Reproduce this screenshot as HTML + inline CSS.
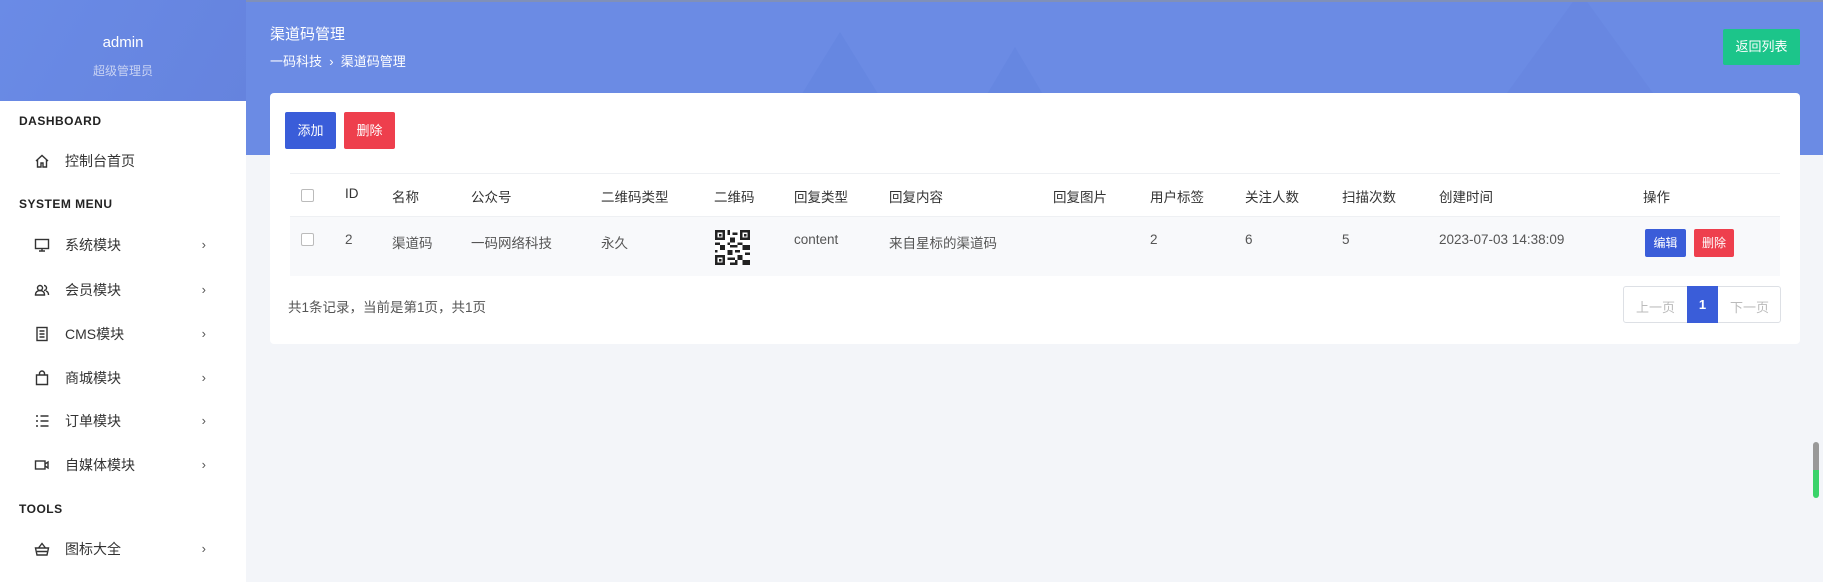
<!DOCTYPE html>
<html><head><meta charset="utf-8"><style>
*{margin:0;padding:0;box-sizing:border-box}
body{width:1823px;height:582px;overflow:hidden;background:#f3f5f9;font-family:"Liberation Sans","Noto Sans CJK SC",sans-serif;color:#333;position:relative}
.top{position:absolute;left:0;top:0;width:1823px;height:155px;background:#6b8be4;border-top:2px solid #8090b8;overflow:hidden}
.tri{position:absolute;width:0;height:0;border-left:80px solid transparent;border-right:80px solid transparent;border-bottom:130px solid rgba(80,110,210,.14)}
.side{position:absolute;left:0;top:101px;width:246px;height:481px;background:#fff}
.prof{position:absolute;left:0;top:0;width:246px;height:101px;text-align:center;color:#fff;background:linear-gradient(120deg,#6a8be6,#6583de)}
.sec{position:absolute;left:19px;font-size:12px;font-weight:bold;letter-spacing:.5px;color:#222}
.it{position:absolute;left:34px;width:180px;font-size:14px;color:#333;height:20px;line-height:20px}
.it svg{position:absolute;left:0;top:2px}
.it span{position:absolute;left:31px}
.it b{position:absolute;right:8px;font-weight:normal;color:#555;font-size:13px}
.card{position:absolute;left:270px;top:93px;width:1530px;height:251px;background:#fff;border-radius:4px}
.btn{position:absolute;color:#fff;font-size:13px;text-align:center;border-radius:2px}
.th,.td{position:absolute;font-size:13.5px;color:#333}
.td{color:#555}
.cb{position:absolute;width:13px;height:13px;border:1px solid #bbb;border-radius:2px;background:#fff}
</style></head><body>
<div class="top">
<div class="tri" style="left:760px;top:30px"></div>
<div class="tri" style="left:950px;top:45px;border-left-width:65px;border-right-width:65px;border-bottom-width:110px"></div>
<div class="tri" style="left:1450px;top:-10px;border-left-width:130px;border-right-width:130px;border-bottom-width:180px;border-bottom-color:rgba(80,110,210,.1)"></div>
</div>
<div class="prof"><div style="position:absolute;top:34px;width:100%;font-size:15px">admin</div><div style="position:absolute;top:62px;width:100%;font-size:12px;color:#c8d2f3">超级管理员</div></div>
<div style="position:absolute;left:270px;top:23px;color:#fff;font-size:15px">渠道码管理</div>
<div style="position:absolute;left:270px;top:51px;color:#fff;font-size:13px">一码科技 &nbsp;›&nbsp; 渠道码管理</div>
<div class="btn" style="left:1723px;top:29px;width:77px;height:36px;line-height:36px;background:#1cc58a">返回列表</div>
<div class="side">
<div class="sec" style="top:13px">DASHBOARD</div>
<div class="it" style="top:50px"><svg width="16" height="16" viewBox="0 0 16 16" fill="none" stroke="#333" stroke-width="1.4"><path d="M2 8L8 2.5 14 8M3.5 6.8V14h3.5v-4h2v4h3.5V6.8"/></svg><span>控制台首页</span></div>
<div class="sec" style="top:96px">SYSTEM MENU</div>
<div class="it" style="top:134px"><svg width="16" height="16" viewBox="0 0 16 16" fill="none" stroke="#333" stroke-width="1.4"><rect x="1.5" y="2.5" width="13" height="9"/><path d="M8 11.5v2.5M5 14h6"/></svg><span>系统模块</span><b>›</b></div>
<div class="it" style="top:179px"><svg width="16" height="16" viewBox="0 0 16 16" fill="none" stroke="#333" stroke-width="1.4"><circle cx="6" cy="6" r="2.5"/><path d="M1.5 13c0-3 2-4.5 4.5-4.5s4.5 1.5 4.5 4.5zM10 3.5a2.5 2.5 0 010 5M12 9c1.5.5 2.5 2 2.5 4"/></svg><span>会员模块</span><b>›</b></div>
<div class="it" style="top:223px"><svg width="16" height="16" viewBox="0 0 16 16" fill="none" stroke="#333" stroke-width="1.4"><rect x="3" y="1.5" width="10" height="13"/><path d="M5.5 5h5M5.5 8h5M5.5 11h5"/></svg><span>CMS模块</span><b>›</b></div>
<div class="it" style="top:267px"><svg width="16" height="16" viewBox="0 0 16 16" fill="none" stroke="#333" stroke-width="1.4"><path d="M2.5 5h11v9.5h-11zM5.5 5V3.5a2.5 2.5 0 015 0V5"/></svg><span>商城模块</span><b>›</b></div>
<div class="it" style="top:310px"><svg width="16" height="16" viewBox="0 0 16 16" fill="none" stroke="#333" stroke-width="1.4"><path d="M2 3h2M2 8h2M2 13h2M6.5 3h8M6.5 8h8M6.5 13h8"/></svg><span>订单模块</span><b>›</b></div>
<div class="it" style="top:354px"><svg width="16" height="16" viewBox="0 0 16 16" fill="none" stroke="#333" stroke-width="1.4"><rect x="1.5" y="4" width="9.5" height="8"/><path d="M11 7l3-2v6l-3-2"/></svg><span>自媒体模块</span><b>›</b></div>
<div class="sec" style="top:401px">TOOLS</div>
<div class="it" style="top:438px"><svg width="16" height="16" viewBox="0 0 16 16" fill="none" stroke="#333" stroke-width="1.4"><path d="M1.5 7h13l-1.5 7H3zM4.5 7L8 2.5 11.5 7M3 10.5h10"/></svg><span>图标大全</span><b>›</b></div>
</div>
<div class="card">
<div class="btn" style="left:15px;top:19px;width:51px;height:37px;line-height:37px;background:#3a5dd9">添加</div>
<div class="btn" style="left:74px;top:19px;width:51px;height:37px;line-height:37px;background:#ee3f4d">删除</div>
<div style="position:absolute;left:20px;top:80px;width:1490px;height:1px;background:#eef0f3"></div>
<div style="position:absolute;left:20px;top:123px;width:1490px;height:60px;background:#f8f9fb;border-top:1px solid #eef0f3"></div>
</div>
<div class="cb" style="left:301px;top:189px"></div>
<div class="th" style="left:345px;top:186px">ID</div>
<div class="th" style="left:392px;top:186px">名称</div>
<div class="th" style="left:471px;top:186px">公众号</div>
<div class="th" style="left:601px;top:186px">二维码类型</div>
<div class="th" style="left:714px;top:186px">二维码</div>
<div class="th" style="left:794px;top:186px">回复类型</div>
<div class="th" style="left:889px;top:186px">回复内容</div>
<div class="th" style="left:1053px;top:186px">回复图片</div>
<div class="th" style="left:1150px;top:186px">用户标签</div>
<div class="th" style="left:1245px;top:186px">关注人数</div>
<div class="th" style="left:1342px;top:186px">扫描次数</div>
<div class="th" style="left:1439px;top:186px">创建时间</div>
<div class="th" style="left:1643px;top:186px">操作</div>
<div class="cb" style="left:301px;top:233px"></div>
<div class="td" style="left:345px;top:232px">2</div>
<div class="td" style="left:392px;top:232px">渠道码</div>
<div class="td" style="left:471px;top:232px">一码网络科技</div>
<div class="td" style="left:601px;top:232px">永久</div>
<svg style="position:absolute;left:715px;top:230px" width="35" height="35" viewBox="0 0 14 14" shape-rendering="crispEdges"><rect width="14" height="14" fill="#fff"/><path fill="#222" d="M0 0h4v4H0zM10 0h4v4h-4zM0 10h4v4H0zM5 0h1v2H5zM7 1h2v1H7zM6 3h2v2H6zM5 5h1v1H5zM9 5h2v1H9zM0 5h2v1H0zM2 6h2v2H2zM6 6h3v1H6zM11 6h3v2h-3zM5 8h2v2H5zM8 8h2v1H8zM12 9h2v1h-2zM9 10h2v2H9zM5 11h3v1H5zM6 13h2v1H6zM11 12h3v2h-3zM0 8h1v1H0zM8 12h1v2H8z"/><path fill="#fff" d="M1 1h2v2H1zM11 1h2v2h-2zM1 11h2v2H1z"/><path fill="#222" d="M1.5 1.5h1v1h-1zM11.5 1.5h1v1h-1zM1.5 11.5h1v1h-1z"/></svg>
<div class="td" style="left:794px;top:232px">content</div>
<div class="td" style="left:889px;top:232px">来自星标的渠道码</div>
<div class="td" style="left:1150px;top:232px">2</div>
<div class="td" style="left:1245px;top:232px">6</div>
<div class="td" style="left:1342px;top:232px">5</div>
<div class="td" style="left:1439px;top:232px">2023-07-03 14:38:09</div>
<div class="btn" style="left:1645px;top:229px;width:41px;height:28px;line-height:28px;background:#3a5dd9;font-size:12px">编辑</div>
<div class="btn" style="left:1694px;top:229px;width:40px;height:28px;line-height:28px;background:#ee3f4d;font-size:12px">删除</div>
<div class="td" style="left:288px;top:296px;color:#555">共1条记录，当前是第1页，共1页</div>
<div style="position:absolute;left:1623px;top:286px;width:158px;height:37px;border:1px solid #dde0e5;border-radius:3px;background:#fff;font-size:13px;color:#bbb">
<span style="position:absolute;left:12px;top:10px">上一页</span>
<span style="position:absolute;left:63px;top:-1px;width:31px;height:37px;background:#3a5dd9;color:#fff;text-align:center;line-height:37px;font-weight:bold">1</span>
<span style="position:absolute;left:106px;top:10px">下一页</span></div>
<div style="position:absolute;left:1813px;top:442px;width:6px;height:56px;border-radius:3px;background:linear-gradient(#999 0 50%,#3ad36a 50%)"></div>
</body></html>
